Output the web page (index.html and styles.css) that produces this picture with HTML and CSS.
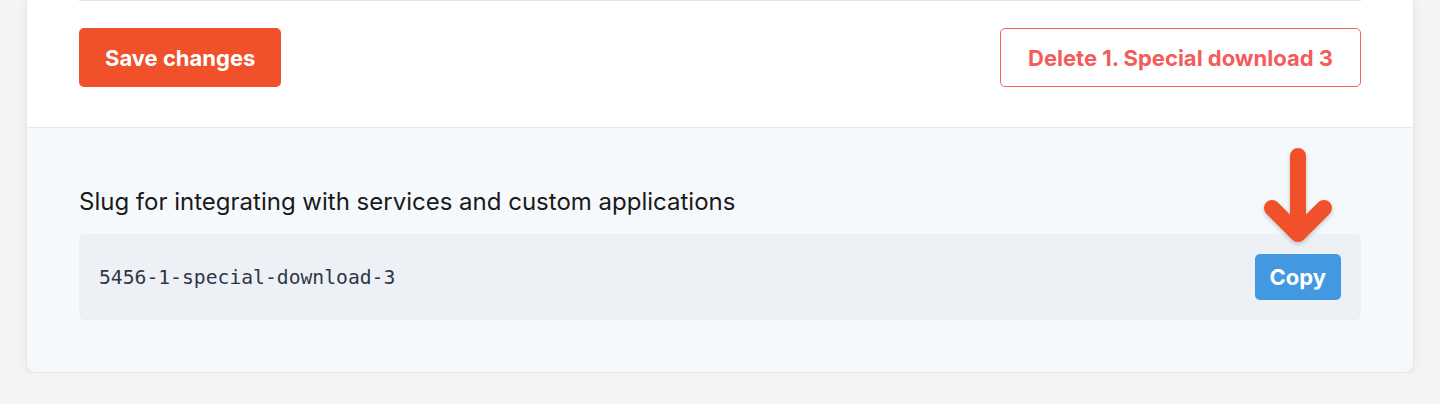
FILE: index.html
```html
<!DOCTYPE html>
<html lang="en">
<head>
    <meta charset="UTF-8">
    <meta name="viewport" content="width=device-width, initial-scale=1.0">
    <title>Edit download</title>
    <link rel="stylesheet" href="styles.css">
</head>
<body>

    <div class="page">
        <div class="card">
            <div class="card-main">
                <div class="rule"></div>
                <div class="actions">
                    <button class="btn btn-save">Save changes</button>
                    <button class="btn btn-delete">Delete 1. Special download 3</button>
                </div>
            </div>

            <div class="card-footer">
                <p class="slug-label">Slug for integrating with services and custom applications</p>
                <div class="slug-box">
                    <code class="slug-value">5456-1-special-download-3</code>
                    <div class="copy-wrap">
                        <!-- hint arrow pointing at the copy button -->
                        <svg class="hint-arrow" width="84" height="100" viewBox="0 0 84 100">
                            <path d="M42 10 V86 M16 62 L42 88 L68 62" fill="none" stroke="#f0512a" stroke-width="16" stroke-linecap="round" stroke-linejoin="round"/>
                        </svg>
                        <button class="btn btn-copy">Copy</button>
                    </div>
                </div>
            </div>
        </div>
    </div>

</body>
</html>
```

FILE: styles.css
```css
body {
    margin: 0;
    background-color: #f4f4f4;
    font-family: Inter, "Liberation Sans", sans-serif;
    color: #1a1a1a;
}

.page {
    padding: 0 26px;
}

.card {
    background-color: white;
    border: 1px solid #e2e8f0;
    border-top: none;
    border-radius: 0 0 10px 10px;
    box-shadow: 0 4px 12px rgba(0, 0, 0, 0.06);
    overflow: hidden;
}

.card-main {
    padding: 0 52px 40px;
}

.rule {
    height: 1px;
    background-color: #dfe3ee;
}

.actions {
    display: flex;
    justify-content: space-between;
    margin-top: 27px;
}

.btn {
    font-family: Inter, "Liberation Sans", sans-serif;
    font-weight: 700;
    font-size: 22px;
    border-radius: 5px;
    cursor: pointer;
}

.btn-save {
    height: 59px;
    padding: 0 26px;
    background-color: #f0512a;
    color: white;
    border: none;
}

.btn-delete {
    height: 59px;
    padding: 0 27px;
    background-color: white;
    color: #f25c5c;
    border: 1.5px solid #f46363;
}

.card-footer {
    position: relative;
    background-color: #f6f9fc;
    border-top: 1px solid #e2e8f0;
    padding: 58px 52px 52px;
}

.slug-label {
    margin: 0 0 16px;
    font-size: 24px;
    line-height: 32px;
}

.slug-box {
    display: flex;
    justify-content: space-between;
    align-items: center;
    background-color: #edf1f6;
    border-radius: 6px;
    padding: 20px;
}

.slug-value {
    font-family: "DejaVu Sans Mono", monospace;
    font-size: 19.7px;
    color: #2d3748;
}

.copy-wrap {
    position: relative;
}

.btn-copy {
    display: block;
    height: 46px;
    padding: 0 15px;
    background-color: #4299e1;
    color: white;
    border: none;
    border-radius: 5px;
}

.hint-arrow {
    position: absolute;
    left: 50%;
    bottom: calc(100% + 8px);
    transform: translateX(-50%);
    filter: drop-shadow(0 2px 2px rgba(0, 0, 0, 0.2));
}
```
